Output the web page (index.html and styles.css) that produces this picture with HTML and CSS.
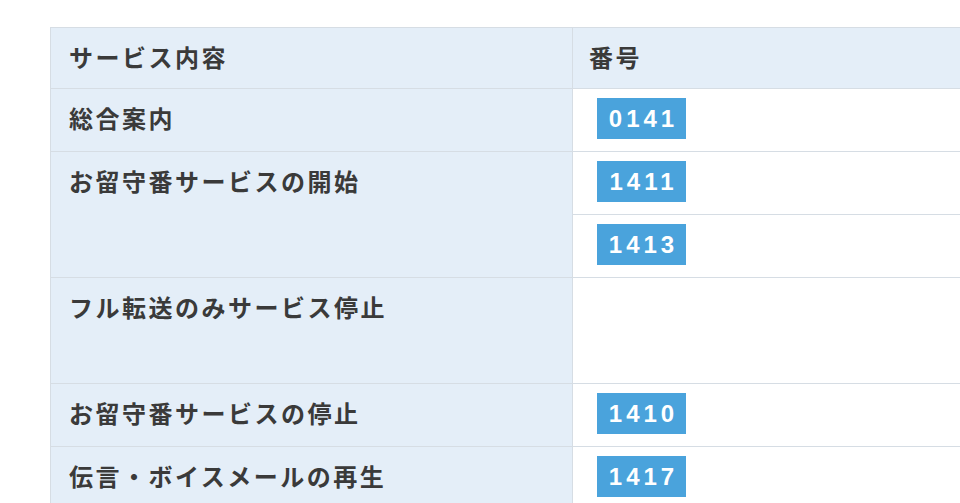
FILE: index.html
```html
<!DOCTYPE html>
<html lang="ja">
<head>
<meta charset="utf-8">
<link rel="stylesheet" href="styles.css">
</head>
<body>
<div class="wrap">
<table class="svc">
  <tr class="head">
    <th class="c-name">サービス内容</th>
    <th class="c-num">番号</th>
  </tr>
  <tr>
    <td class="c-name">総合案内</td>
    <td class="c-num"><span class="badge">0141</span></td>
  </tr>
  <tr>
    <td class="c-name" rowspan="2">お留守番サービスの開始</td>
    <td class="c-num"><span class="badge">1411</span></td>
  </tr>
  <tr>
    <td class="c-num"><span class="badge">1413</span></td>
  </tr>
  <tr class="tall">
    <td class="c-name">フル転送のみサービス停止</td>
    <td class="c-num"></td>
  </tr>
  <tr>
    <td class="c-name">お留守番サービスの停止</td>
    <td class="c-num"><span class="badge">1410</span></td>
  </tr>
  <tr>
    <td class="c-name">伝言・ボイスメールの再生</td>
    <td class="c-num"><span class="badge">1417</span></td>
  </tr>
</table>
</div>
</body>
</html>
```
FILE: styles.css
```css
html, body {
  margin: 0;
  padding: 0;
  background: #ffffff;
  overflow: hidden;
}
.wrap {
  padding: 27px 0 0 50px;
}
.svc {
  border-collapse: collapse;
  width: 910px;
  table-layout: fixed;
  font-family: "Noto Sans CJK JP", "Noto Sans", sans-serif;
  color: #3a3a3a;
}
.svc th, .svc td {
  border: 1px solid #d6dde4;
  vertical-align: top;
  text-align: left;
  padding: 0;
}
.svc .c-num { border-right: 0; }
.svc tr { height: 63px; }
.svc tr.head { height: 61px; }
.svc tr.tall { height: 106px; }
.c-name {
  width: 485px;
  background: #e4eef8;
  font-size: 24px;
  font-weight: bold;
  letter-spacing: 2.5px;
  line-height: 36px;
  padding: 11px 18px 0 18px !important;
}
th.c-num {
  background: #e4eef8;
  font-size: 24px;
  font-weight: bold;
  letter-spacing: 2.5px;
  line-height: 36px;
  padding: 11px 16px 0 16px !important;
}
td.c-num {
  background: #ffffff;
  padding: 9px 0 0 24px !important;
}
.badge {
  display: inline-block;
  width: 89px;
  height: 41px;
  line-height: 41px;
  background: #4aa3dc;
  color: #ffffff;
  font-family: "Liberation Sans", Arial, sans-serif;
  font-weight: bold;
  font-size: 24px;
  letter-spacing: 4px;
  text-indent: 4px;
  text-align: center;
  vertical-align: top;
}
```
